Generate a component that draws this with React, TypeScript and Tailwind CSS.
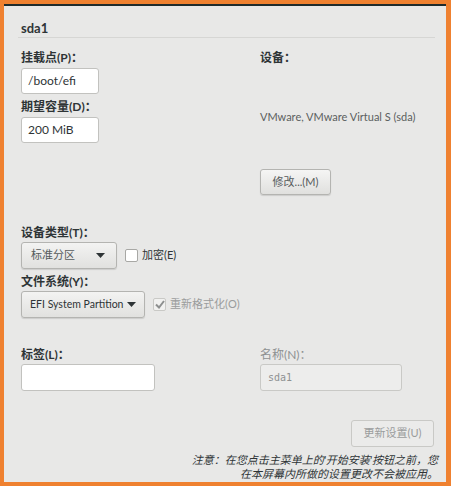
import React from "react";

const font = { fontFamily: 'Lato, "Noto Sans CJK SC", sans-serif' };

function Caret() {
  return (
    <svg width="9" height="5" viewBox="0 0 9 5" className="shrink-0">
      <path d="M0 0 H9 L4.5 5 Z" fill="#2e3436" />
    </svg>
  );
}

function Checkbox({ checked, disabled }: { checked?: boolean; disabled?: boolean }) {
  return (
    <span
      className={
        "flex h-[13px] w-[13px] shrink-0 items-center justify-center rounded-[2px] border " +
        (disabled ? "border-[#c9c9c6] bg-[#f1f1f0]" : "border-[#a8a8a5] bg-white")
      }
    >
      {checked && (
        <svg width="10" height="9" viewBox="0 0 10 9">
          <path d="M1 4.5 L4 7.5 L9 1" fill="none" stroke="#8d8f8f" strokeWidth="2" />
        </svg>
      )}
    </span>
  );
}

export default function App() {
  return (
    <div
      style={font}
      className="flex h-[486px] w-[451px] flex-col overflow-hidden border-b-[4px] border-l-4 border-r-[5px] border-t-4 border-[#ef8130] bg-[#e8e8e7] text-[12px] text-[#2e3436]"
    >
      <div className="h-[2px] shrink-0 bg-[#1e2b2d]" />
      <div className="ml-[14px] mr-[11px] border-b border-[#d6d6d4] pb-[1px] pt-[14px]">
        <h1 className="pl-[3px] text-[13px] font-bold leading-[16px]">sda1</h1>
      </div>

      <div className="grid grid-cols-[239px_1fr] pl-[17px]">
        {/* row 1 */}
        <div className="flex flex-col pt-[13px]">
          <label className="font-bold leading-[14px]">挂载点(P)：</label>
          <div className="mt-[3px] flex h-[26px] w-[78px] items-center rounded-[3px] border border-[#c2c2bf] bg-white px-[6px]">
            /boot/efi
          </div>
          <label className="mt-[6px] font-bold leading-[14px]">期望容量(D)：</label>
          <div className="mt-[3px] flex h-[26px] w-[78px] items-center rounded-[3px] border border-[#c2c2bf] bg-white px-[6px]">
            200 MiB
          </div>
        </div>
        <div className="flex flex-col pt-[13px]">
          <label className="font-bold leading-[14px]">设备：</label>
          <p className="mt-[45px] whitespace-nowrap text-[11px] leading-[14px] text-[#5b5f60]">
            VMware, VMware Virtual S (sda)
          </p>
          <button className="mt-[45px] flex h-[26px] w-[71px] items-center justify-center rounded-[3px] border border-[#b4b4b1] bg-gradient-to-b from-[#f5f5f4] to-[#e0e0de] text-[11px] text-[#555a5b] shadow-[0_1px_1px_rgba(0,0,0,0.12)]">
            修改...(M)
          </button>
        </div>

        {/* row 2 */}
        <div className="col-span-2 flex flex-col pt-[31px]">
          <label className="font-bold leading-[14px]">设备类型(T)：</label>
          <div className="mt-[2px] flex items-center gap-[8px]">
            <div className="flex h-[27px] w-[96px] items-center justify-between whitespace-nowrap rounded-[3px] border border-[#b4b4b1] bg-gradient-to-b from-[#f3f3f2] to-[#e1e1df] pl-[9px] pr-[11px] text-[11px] text-[#555a5b] shadow-[0_1px_1px_rgba(0,0,0,0.12)]">
              标准分区
              <Caret />
            </div>
            <Checkbox />
            <span className="-ml-[4px] text-[11px]">加密(E)</span>
          </div>
          <label className="mt-[6px] font-bold leading-[14px]">文件系统(Y)：</label>
          <div className="mt-[2px] flex items-center gap-[8px]">
            <div className="flex h-[27px] w-[124px] items-center justify-between gap-[4px] whitespace-nowrap rounded-[3px] border border-[#b4b4b1] bg-gradient-to-b from-[#f3f3f2] to-[#e1e1df] pl-[8px] pr-[8px] text-[10.5px] text-[#2e3436] shadow-[0_1px_1px_rgba(0,0,0,0.12)]">
              EFI System Partition
              <Caret />
            </div>
            <Checkbox checked disabled />
            <span className="-ml-[4px] text-[11px] text-[#9a9c9c]">重新格式化(O)</span>
          </div>
        </div>

        {/* row 3 */}
        <div className="flex flex-col pt-[30px]">
          <label className="font-bold leading-[14px]">标签(L)：</label>
          <div className="mt-[2px] h-[27px] w-[134px] rounded-[3px] border border-[#c2c2bf] bg-white" />
        </div>
        <div className="flex flex-col pt-[30px]">
          <label className="leading-[14px] text-[#8e9192]">名称(N)：</label>
          <div
            style={{ fontFamily: '"DejaVu Sans Mono", monospace' }}
            className="mt-[2px] flex h-[27px] w-[142px] items-center rounded-[3px] border border-[#c9c9c6] bg-[#ededec] px-[7px] text-[10px] text-[#8e9192]"
          >
            sda1
          </div>
        </div>
      </div>

      <div className="flex justify-end pr-[12px] pt-[29px]">
        <button className="flex h-[27px] w-[83px] items-center justify-center rounded-[3px] border border-[#c9c9c6] bg-[#ebebea] text-[11px] text-[#9a9c9c]">
          更新设置(U)
        </button>
      </div>
      <p className="mt-[6px] pr-[8px] text-right text-[11px] italic leading-[14px] text-[#2e3436]">
        注意：在您点击主菜单上的'开始安装'按钮之前，您
        <br />
        在本屏幕内所做的设置更改不会被应用。
      </p>
    </div>
  );
}
